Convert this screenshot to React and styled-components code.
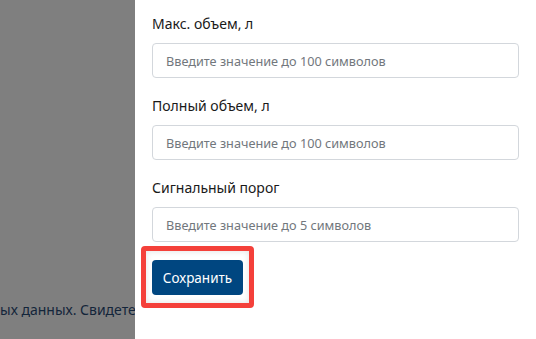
import React from 'react';
import styled, { createGlobalStyle } from 'styled-components';

const GlobalStyle = createGlobalStyle`
  html, body {
    margin: 0;
    padding: 0;
    width: 536px;
    height: 339px;
    overflow: hidden;
  }
  body {
    font-family: "Noto Sans", "Open Sans", sans-serif;
  }
`;

const Screen = styled.div`
  display: flex;
  width: 536px;
  height: 339px;
`;

const Backdrop = styled.div`
  width: 135px;
  background: #7f7f7f;
  overflow: hidden;
  display: flex;
  flex-direction: column;
  justify-content: flex-end;
  padding-bottom: 19px;
  box-sizing: border-box;
`;

const BackText = styled.div`
  white-space: nowrap;
  font-size: 14px;
  color: #13253a;
  line-height: 20px;
`;

const Panel = styled.div`
  flex: 1;
  background: #fff;
  padding: 14px 17px 0 17px;
  display: flex;
  flex-direction: column;
`;

const Field = styled.div`
  display: flex;
  flex-direction: column;
  margin-bottom: 18px;
`;

const Label = styled.label`
  font-size: 14px;
  line-height: 20px;
  color: #1a1a1a;
  margin-bottom: 9px;
`;

const Input = styled.input`
  height: 35px;
  box-sizing: border-box;
  border: 1px solid #d3d7dc;
  border-radius: 4px;
  padding: 0 13px;
  font-family: inherit;
  font-size: 12.7px;
  outline: none;
  &::placeholder {
    color: #72777d;
  }
`;

const Highlight = styled.div`
  align-self: flex-start;
  margin: -14px 0 0 -11px;
  padding: 9px 6px 8px;
  border: 5px solid #f4403a;
  border-radius: 4px;
  box-shadow: inset 0 0 6px rgba(0, 0, 0, 0.12);
`;

const Button = styled.button`
  width: 91px;
  height: 35px;
  background: #004680;
  color: #fff;
  border: none;
  border-radius: 4px;
  font-family: inherit;
  font-size: 13.5px;
  display: flex;
  align-items: center;
  justify-content: center;
`;

const fields = [
  { label: 'Макс. объем, л', hint: 'Введите значение до 100 символов' },
  { label: 'Полный объем, л', hint: 'Введите значение до 100 символов' },
  { label: 'Сигнальный порог', hint: 'Введите значение до 5 символов' },
];

export default function App() {
  return (
    <>
      <GlobalStyle />
      <Screen>
        <Backdrop>
          <BackText>ых данных. Свидетельство о регистрации</BackText>
        </Backdrop>
        <Panel>
          {fields.map((f) => (
            <Field key={f.label}>
              <Label>{f.label}</Label>
              <Input placeholder={f.hint} />
            </Field>
          ))}
          <Highlight>
            <Button>Сохранить</Button>
          </Highlight>
        </Panel>
      </Screen>
    </>
  );
}
